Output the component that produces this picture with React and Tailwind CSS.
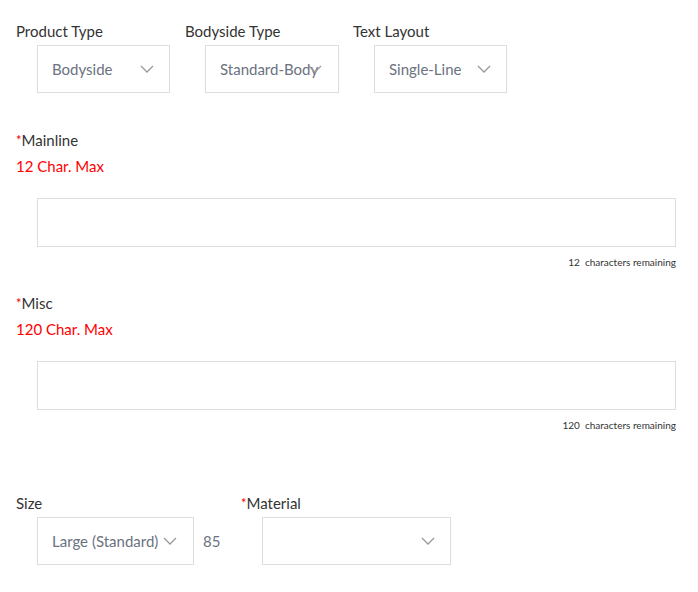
import React from 'react';

const Chevron = () => (
  <svg width="14" height="8" viewBox="0 0 14 8" fill="none" className="shrink-0">
    <path d="M1 1l6 6 6-6" stroke="#999" strokeWidth="1.3" />
  </svg>
);

const Select = ({ value, w, chevronOverlap }) => (
  <div className={`h-12 border border-[#ddd] bg-white flex items-center pl-[14px] pr-[15px] text-[15px] text-[#6b7280] relative ${w}`}>
    <span className="whitespace-nowrap overflow-hidden flex-1">{value}</span>
    {chevronOverlap ? (
      <span className="absolute right-[16px] top-1/2 -translate-y-1/2"><Chevron /></span>
    ) : (
      <Chevron />
    )}
  </div>
);

const Label = ({ children, req }) => (
  <div className="text-[15px] text-[#333] leading-5">
    {req && <span className="text-[#e00] text-[13px] align-top">*</span>}
    {children}
  </div>
);

const TextField = ({ title, max }) => (
  <div className="flex flex-col">
    <Label req>{title}</Label>
    <div className="text-[15px] text-[#ff0000] leading-5 mt-[6px]">{max} Char. Max</div>
    <div className="ml-[21px] mt-[22px] h-[49px] border border-[#ddd] bg-white" />
    <div className="self-end text-[10px] text-[#333] mt-[9px] leading-3">{max}&nbsp; characters remaining</div>
  </div>
);

export default function App() {
  return (
    <div className="w-[698px] h-[592px] bg-white px-4 pt-[21px] font-['Lato','Liberation_Sans',sans-serif] pr-[22px]">
      <div className="flex">
        <div className="w-[169px]">
          <Label>Product Type</Label>
          <div className="ml-[21px] mt-[4px]"><Select value="Bodyside" w="w-[133px]" /></div>
        </div>
        <div className="w-[168px]">
          <Label>Bodyside Type</Label>
          <div className="ml-[20px] mt-[4px]"><Select value="Standard-Body" w="w-[134px]" chevronOverlap /></div>
        </div>
        <div className="w-[160px]">
          <Label>Text Layout</Label>
          <div className="ml-[21px] mt-[4px]"><Select value="Single-Line" w="w-[133px]" /></div>
        </div>
      </div>

      <div className="mt-[37px]">
        <TextField title="Mainline" max={12} />
      </div>
      <div className="mt-[25px]">
        <TextField title="Misc" max={120} />
      </div>

      <div className="flex mt-[62px]">
        <div className="w-[225px]">
          <Label>Size</Label>
          <div className="ml-[21px] mt-[4px] flex items-center">
            <Select value="Large (Standard)" w="w-[157px]" chevronOverlap />
            <span className="ml-[9px] text-[15px] text-[#6b7280]">85</span>
          </div>
        </div>
        <div>
          <Label req>Material</Label>
          <div className="ml-[21px] mt-[4px]"><Select value="" w="w-[189px]" /></div>
        </div>
      </div>
    </div>
  );
}
